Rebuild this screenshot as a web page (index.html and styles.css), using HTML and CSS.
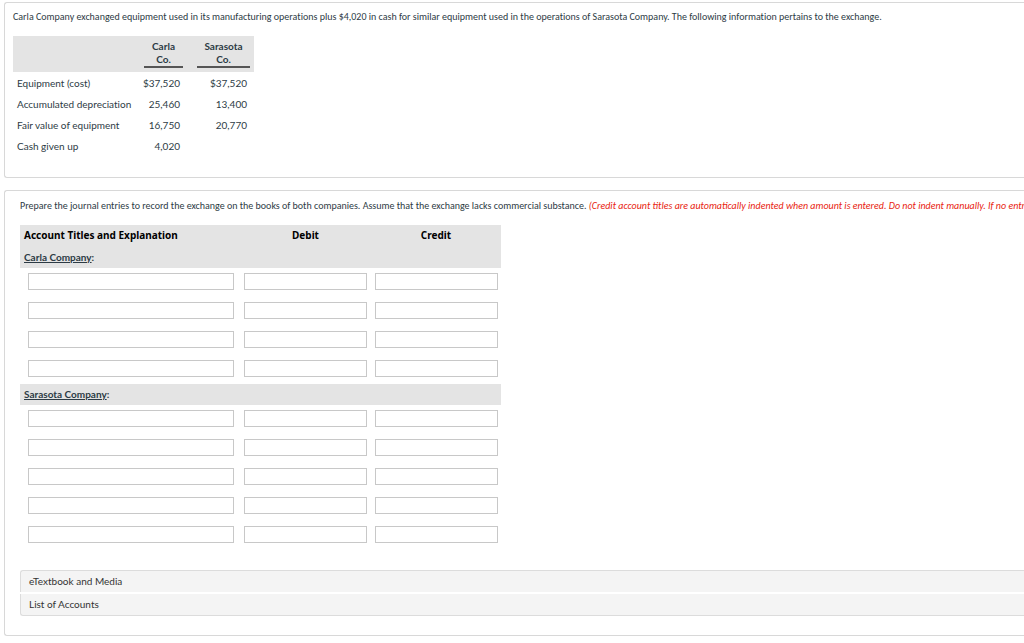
FILE: index.html
```html
<!DOCTYPE html>
<html lang="en">
<head>
<meta charset="utf-8">
<title>Equipment exchange</title>
<link rel="stylesheet" href="styles.css">
</head>
<body>
<main class="page">
<section class="panel panel-info">
<p class="prompt">Carla Company exchanged equipment used in its manufacturing operations plus $4,020 in cash for similar equipment used in the operations of Sarasota Company. The following information pertains to the exchange.</p>
<table class="facts">
<colgroup><col class="fact-label"><col class="fact-carla"><col class="fact-gap"><col class="fact-sarasota"></colgroup>
<thead><tr><td></td><th scope="col"><span class="rule">Carla<br>Co.</span></th><td></td><th scope="col"><span class="rule">Sarasota<br>Co.</span></th></tr></thead>
<tbody>
<tr><th scope="row">Equipment (cost)</th><td>$37,520</td><td></td><td>$37,520</td></tr>
<tr><th scope="row">Accumulated depreciation</th><td>25,460</td><td></td><td>13,400</td></tr>
<tr><th scope="row">Fair value of equipment</th><td>16,750</td><td></td><td>20,770</td></tr>
<tr><th scope="row">Cash given up</th><td>4,020</td><td></td><td></td></tr>
</tbody>
</table>
</section>
<section class="panel panel-entry">
<p class="prompt">Prepare the journal entries to record the exchange on the books of both companies. Assume that the exchange lacks commercial substance. <em class="note">(Credit account titles are automatically indented when amount is entered. Do not indent manually. If no entry</em></p>
<table class="journal">
<colgroup><col class="col-account"><col class="col-debit"><col class="col-credit"></colgroup>
<thead><tr><th scope="col" class="left">Account Titles and Explanation</th><th scope="col">Debit</th><th scope="col">Credit</th></tr></thead>
<tbody>
<tr class="company"><th colspan="3"><u>Carla Company</u>:</th></tr>
<tr><td><input type="text" aria-label="Carla account 1"></td><td><input type="text" aria-label="Carla debit 1"></td><td><input type="text" aria-label="Carla credit 1"></td></tr>
<tr><td><input type="text" aria-label="Carla account 2"></td><td><input type="text" aria-label="Carla debit 2"></td><td><input type="text" aria-label="Carla credit 2"></td></tr>
<tr><td><input type="text" aria-label="Carla account 3"></td><td><input type="text" aria-label="Carla debit 3"></td><td><input type="text" aria-label="Carla credit 3"></td></tr>
<tr><td><input type="text" aria-label="Carla account 4"></td><td><input type="text" aria-label="Carla debit 4"></td><td><input type="text" aria-label="Carla credit 4"></td></tr>
</tbody>
<tbody>
<tr class="company"><th colspan="3"><u>Sarasota Company</u>:</th></tr>
<tr><td><input type="text" aria-label="Sarasota account 1"></td><td><input type="text" aria-label="Sarasota debit 1"></td><td><input type="text" aria-label="Sarasota credit 1"></td></tr>
<tr><td><input type="text" aria-label="Sarasota account 2"></td><td><input type="text" aria-label="Sarasota debit 2"></td><td><input type="text" aria-label="Sarasota credit 2"></td></tr>
<tr><td><input type="text" aria-label="Sarasota account 3"></td><td><input type="text" aria-label="Sarasota debit 3"></td><td><input type="text" aria-label="Sarasota credit 3"></td></tr>
<tr><td><input type="text" aria-label="Sarasota account 4"></td><td><input type="text" aria-label="Sarasota debit 4"></td><td><input type="text" aria-label="Sarasota credit 4"></td></tr>
<tr><td><input type="text" aria-label="Sarasota account 5"></td><td><input type="text" aria-label="Sarasota debit 5"></td><td><input type="text" aria-label="Sarasota credit 5"></td></tr>
</tbody>
</table>
<div class="resources">
<button type="button" class="resource">eTextbook and Media</button>
<button type="button" class="resource">List of Accounts</button>
</div>
</section>
</main>
</body>
</html>
```
FILE: styles.css
```css
* { box-sizing: border-box; }
body { margin: 0; background: #fff; color: #2d3b45; font: 10px/14px Lato, sans-serif; font-variant-ligatures: none; }
.page { display: flex; flex-direction: column; gap: 12px; padding: 2px 0 6px 4px; }
.panel { border: 1px solid #d8d8d8; border-right: 0; border-radius: 3px 0 0 3px; overflow: hidden; }
.panel-info { padding: 7px 0 21px 8px; }
.panel-entry { padding: 8px 0 19px 15px; }
.prompt { margin: 0; font-family: Carlito, Lato, sans-serif; white-space: nowrap; }
.note { color: #e8230f; font-variant-ligatures: normal; }
table { border-collapse: collapse; table-layout: fixed; }
th, td { padding: 0; }

.facts { width: 241px; margin-top: 12px; }
.fact-label { width: 127px; }
.fact-carla { width: 47px; }
.fact-gap { width: 6px; }
.fact-sarasota { width: 61px; }
.facts thead { background: #e4e4e4; }
.facts thead th { padding: 4px; line-height: 13px; }
.rule { display: block; border-bottom: 2px solid #555; }
.facts tbody tr { height: 21px; }
.facts tbody th { padding-left: 4px; font-weight: 400; text-align: left; white-space: nowrap; }
.facts tbody td { padding-right: 7px; text-align: right; }

.journal { width: 481px; margin-top: 12px; }
.col-account { width: 220px; }
.col-debit { width: 131px; }
.col-credit { width: 130px; }
.journal thead, .company { background: #e4e4e4; }
.journal thead tr { height: 22px; }
.journal thead th { padding-bottom: 2px; color: #000; font-family: "Noto Sans", sans-serif; }
.journal .company { height: 21px; }
.journal .left, .company th { padding-left: 4px; text-align: left; }
.company th { padding-bottom: 2px; }
.journal td { height: 29px; padding: 5px 4px 7px; vertical-align: top; }
.journal td:first-child { padding-right: 6px; padding-left: 8px; }
.journal td:last-child { padding-right: 3px; }
.journal input { display: block; width: 100%; height: 17px; padding: 0 2px; border: 1px solid #c8c8c8; border-radius: 0; background: #fff; font: inherit; }

.resources { display: flex; flex-direction: column; gap: 2px; margin-top: 20px; }
.resource { height: 22px; padding: 0 8px 1px; border: 1px solid #dcdcdc; border-width: 1px 0 0 1px; border-radius: 3px 0 0 0; background: #f4f4f4; color: #333; font: inherit; text-align: left; }
.resource:last-child { border-width: 0 0 1px 1px; border-radius: 0 0 0 3px; }
```
